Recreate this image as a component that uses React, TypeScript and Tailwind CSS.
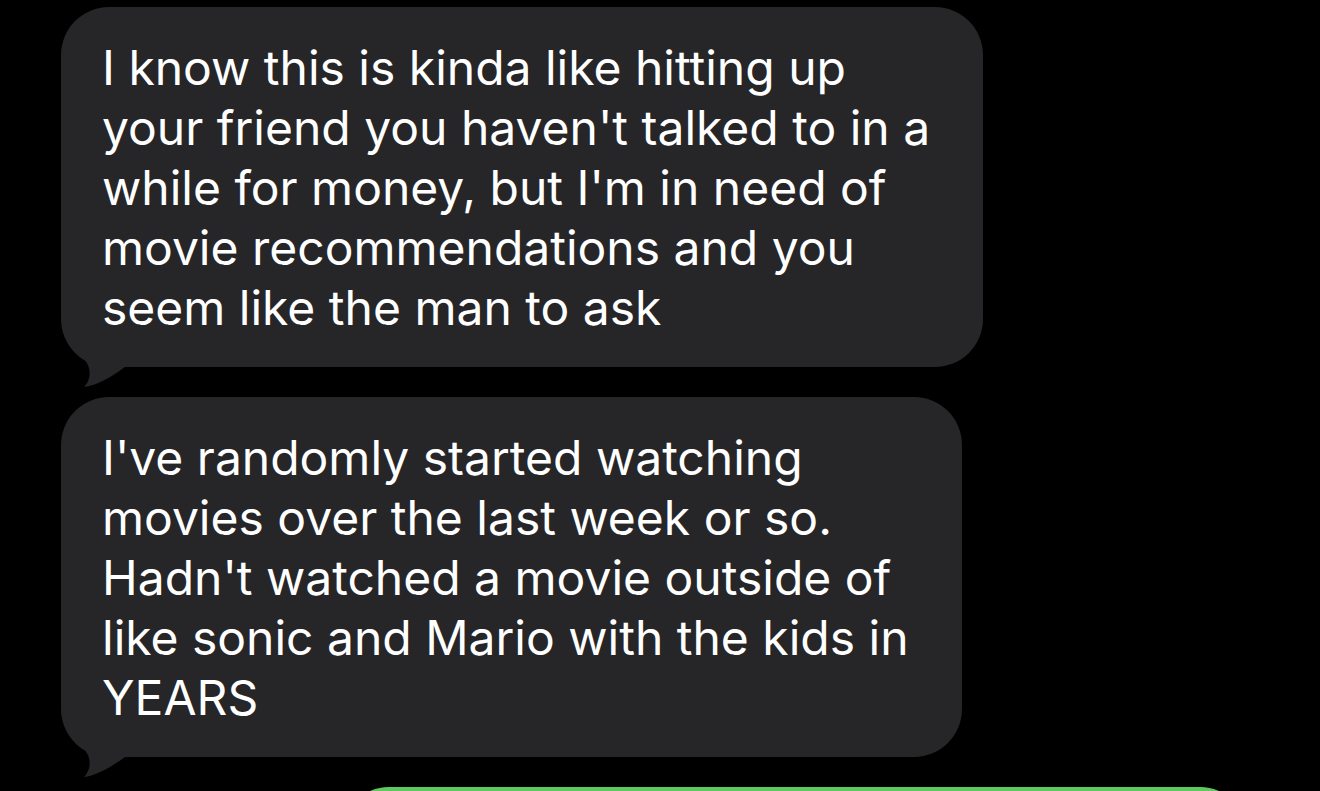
const font = { fontFamily: 'Inter, "Noto Sans", sans-serif' };

function Tail() {
  return (
    <svg
      className="absolute left-0 bottom-[-21px]"
      width="120"
      height="98"
      viewBox="0 0 120 98"
    >
      <path
        d="M0,0 L0,20 C0,45 19,60 27,75 C31,85 27,93 23,97 C34,96 49,88 64,77 L120,77 L120,0 Z"
        fill="#262628"
      />
    </svg>
  );
}

function Bubble({ lines, width }: { lines: string[]; width: string }) {
  return (
    <div className={`relative ml-[61px] ${width} rounded-[48px] bg-[#262628] pl-[41px] pt-[31px] pb-[29px]`}>
      <Tail />
      <div className="relative text-[48px] leading-[60px] text-white" style={font}>
        {lines.map((l) => (
          <div key={l} className="whitespace-nowrap">{l}</div>
        ))}
      </div>
    </div>
  );
}

export default function App() {
  return (
    <div className="h-[791px] w-[1320px] overflow-hidden bg-black pt-[7px]">
      <div className="flex flex-col gap-[30px]">
        <Bubble
          width="w-[922px]"
          lines={[
            'I know this is kinda like hitting up',
            "your friend you haven't talked to in a",
            "while for money, but I'm in need of",
            'movie recommendations and you',
            'seem like the man to ask',
          ]}
        />
        <Bubble
          width="w-[901px]"
          lines={[
            "I've randomly started watching",
            'movies over the last week or so.',
            "Hadn't watched a movie outside of",
            'like sonic and Mario with the kids in',
            'YEARS',
          ]}
        />
        <div className="ml-[341px] h-[200px] w-[907px] rounded-[48px] bg-[#5dc95e]" />
      </div>
    </div>
  );
}
